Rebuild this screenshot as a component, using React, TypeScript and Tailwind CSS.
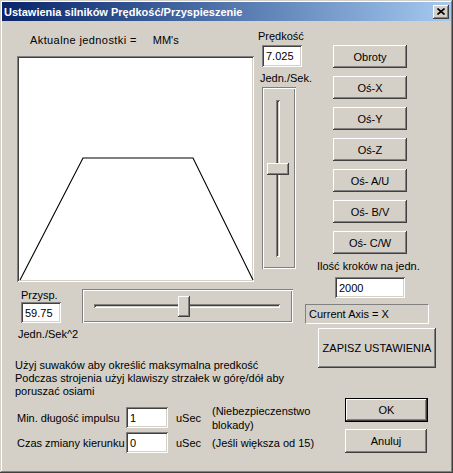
import React from "react";

const raised =
  "shadow-[inset_-1px_-1px_0_#404040,inset_1px_1px_0_#ffffff,inset_-2px_-2px_0_#808080,inset_2px_2px_0_#d4d0c8]";
const sunken =
  "shadow-[inset_1px_1px_0_#808080,inset_-1px_-1px_0_#ffffff,inset_2px_2px_0_#404040,inset_-2px_-2px_0_#d4d0c8]";
const etched =
  "shadow-[inset_1px_1px_0_#808080,inset_-1px_-1px_0_#ffffff,inset_2px_2px_0_#ffffff,inset_-2px_-2px_0_#808080]";

function Btn({ label, className = "" }: { label: string; className?: string }) {
  return (
    <div
      className={`flex items-center justify-center bg-[#d4d0c8] ${raised} ${className}`}
    >
      {label}
    </div>
  );
}

function Field({ value, className = "" }: { value: string; className?: string }) {
  return (
    <div className={`bg-white ${sunken} pl-[4px] flex items-center ${className}`}>
      {value}
    </div>
  );
}

export default function App() {
  const axisButtons = ["Obroty", "Oś-X", "Oś-Y", "Oś-Z", "Oś- A/U", "Oś- B/V", "Oś- C/W"];

  return (
    <div className="w-[453px] h-[473px] bg-[#d4d0c8] p-[2px] overflow-hidden shadow-[inset_-1px_-1px_0_#404040,inset_1px_1px_0_#d4d0c8,inset_-2px_-2px_0_#808080,inset_2px_2px_0_#ffffff] font-['Liberation_Sans',Arial,sans-serif] text-[11px] leading-[14px] text-black">
      {/* Title bar */}
      <div className="h-[19px] flex items-center justify-between bg-gradient-to-r from-[#0a246a] to-[#a6caf0]">
        <span className="pl-[2px] text-white font-bold text-[11px]">
          Ustawienia silników Prędkość/Przyspieszenie
        </span>
        <div className={`w-[16px] h-[14px] mr-[2px] flex items-center justify-center bg-[#d4d0c8] ${raised}`}>
          <svg width="8" height="7" viewBox="0 0 8 7">
            <path d="M0.5 0.5 L7.5 6.5 M7.5 0.5 L0.5 6.5" stroke="#000" strokeWidth="1.6" />
          </svg>
        </div>
      </div>

      {/* Upper section */}
      <div className="flex">
        <div className="w-[301px] flex flex-col">
          <div className="flex">
            {/* Graph */}
            <div className="ml-[15px] flex flex-col">
              <div className="mt-[12px] pl-[13px] flex">
                <span className="tracking-[0.4px]">Aktualne jednostki =</span>
                <span className="ml-[16px]">MM's</span>
              </div>
              <div className={`mt-[9px] w-[237px] h-[226px] bg-white ${sunken}`}>
                <svg width="237" height="226" viewBox="0 0 237 226">
                  <polyline
                    points="3,224 66,102 176,102 236,224"
                    fill="none"
                    stroke="#000"
                    strokeWidth="1.1"
                  />
                </svg>
              </div>
            </div>
            {/* Speed */}
            <div className="ml-[4px] flex flex-col">
              <span className="mt-[8px]">Prędkość</span>
              <Field value="7.025" className="mt-[2px] ml-[4px] w-[40px] h-[22px]" />
              <span className="mt-[4px] ml-[2px]">Jedn./Sek.</span>
              <div className={`mt-[2px] ml-[4px] w-[34px] h-[182px] relative ${etched}`}>
                <div className="absolute left-[14px] top-[13px] w-[4px] h-[157px] shadow-[inset_1px_1px_0_#808080,inset_-1px_-1px_0_#ffffff,inset_2px_2px_0_#404040]" />
                <div className={`absolute left-[5px] top-[76px] w-[22px] h-[12px] bg-[#d4d0c8] ${raised}`} />
              </div>
            </div>
          </div>

          {/* Acceleration */}
          <div className="flex">
            <div className="ml-[16px] w-[64px] flex flex-col">
              <span className="mt-[7px] pl-[3px] leading-[13px]">Przysp.</span>
              <Field value="59.75" className="ml-[3px] w-[40px] h-[21px]" />
              <span className="mt-[4px]">Jedn./Sek^2</span>
            </div>
            <div className={`mt-[7px] w-[211px] h-[34px] relative ${etched}`}>
              <div className="absolute left-[12px] top-[15px] w-[186px] h-[4px] shadow-[inset_1px_1px_0_#808080,inset_-1px_-1px_0_#ffffff,inset_2px_2px_0_#404040]" />
              <div className={`absolute left-[96px] top-[7px] w-[12px] h-[21px] bg-[#d4d0c8] ${raised}`} />
            </div>
          </div>

          <div className="mt-[18px] pl-[13px] leading-[13px]">
            <div>Użyj suwaków aby określić maksymalna predkość</div>
            <div>Podczas strojenia użyj klawiszy strzałek w górę/dół aby</div>
            <div>poruszać osiami</div>
          </div>
        </div>

        {/* Right column */}
        <div className="flex flex-col">
          <div className="mt-[24px] ml-[30px] flex flex-col gap-[8px]">
            {axisButtons.map((b) => (
              <Btn key={b} label={b} className="w-[74px] h-[23px]" />
            ))}
          </div>
          <span className="mt-[5px] ml-[14px]">Ilość kroków na jedn.</span>
          <Field value="2000" className="mt-[4px] ml-[32px] w-[70px] h-[21px]" />
          <div className="mt-[6px] ml-[2px] w-[124px] h-[20px] pl-[3px] flex items-center border-t border-l border-[#808080] border-r-white border-b-white border-r border-b">
            Current Axis = X
          </div>
          <Btn label="ZAPISZ USTAWIENIA" className="mt-[4px] ml-[15px] w-[118px] h-[40px]" />
        </div>
      </div>

      {/* Bottom section */}
      <div className="flex">
        <div className="ml-[15px] w-[328px] flex flex-col">
          <div className="mt-[9px] h-[21px] flex items-center">
            <span className="w-[109px]">Min. długość impulsu</span>
            <Field value="1" className="w-[42px] h-[21px]" />
            <span className="w-[44px] pl-[8px]">uSec</span>
            <div className="leading-[14px]">
              <div>(Niebezpieczenstwo</div>
              <div>blokady)</div>
            </div>
          </div>
          <div className="mt-[4px] h-[21px] flex items-center">
            <span className="w-[109px]">Czas zmiany kierunku</span>
            <Field value="0" className="w-[42px] h-[21px]" />
            <span className="w-[44px] pl-[8px]">uSec</span>
            <span>(Jeśli większa od 15)</span>
          </div>
        </div>
        <div className="flex flex-col">
          <div className="w-[83px] h-[24px] border border-black">
            <Btn label="OK" className="w-full h-full" />
          </div>
          <Btn label="Anuluj" className="mt-[7px] w-[82px] h-[24px]" />
        </div>
      </div>
    </div>
  );
}
